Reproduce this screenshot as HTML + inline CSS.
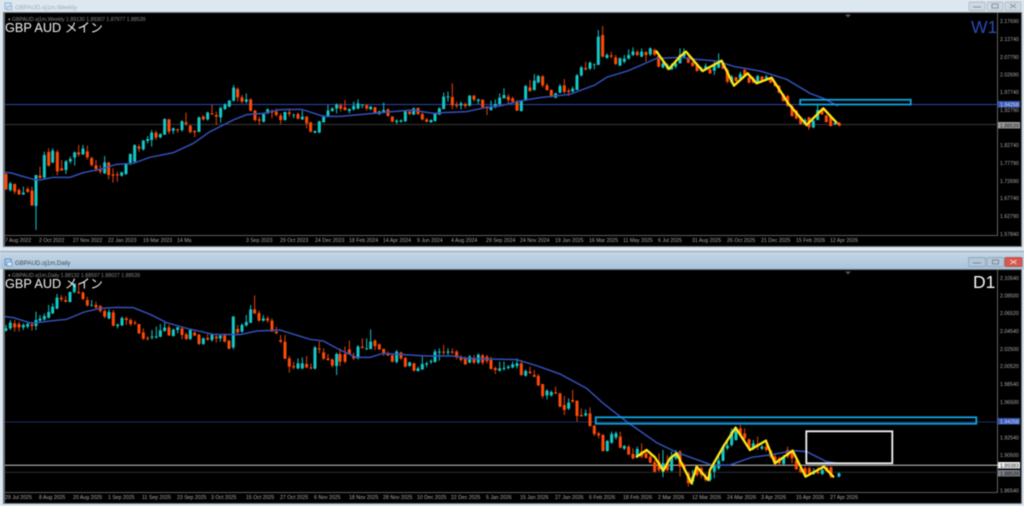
<!DOCTYPE html>
<html><head><meta charset="utf-8"><style>
html,body{margin:0;padding:0;background:#dde7f0;width:1024px;height:506px;overflow:hidden}
svg{display:block;filter:blur(.42px)}
text{font-family:"Liberation Sans","Noto Sans CJK JP",sans-serif}
.tw{stroke:#14c4c4;stroke-width:3;fill:none}
.ow{stroke:#e8400c;stroke-width:3;fill:none}
.tb{stroke:#14c8c8;stroke-width:9;fill:none}
.ob{stroke:#ff4a08;stroke-width:9;fill:none}
.ma{stroke:#3250b8;stroke-width:4.500;fill:none}
.ye{stroke:#ffe814;stroke-width:7;fill:none;stroke-linejoin:round}
.ax text{font-size:5.200px;fill:#a8a8a8}
.ti{font-size:5.200px;fill:#8a8a8a}
.big{font-size:12.700px;fill:#f0f0f0}
.lb{font-size:5.200px}
</style></head><body>
<svg width="1024" height="506" viewBox="0 0 1024 506" xmlns="http://www.w3.org/2000/svg">
<defs><linearGradient id="g1" x1="0" y1="0" x2="0" y2="1"><stop offset="0" stop-color="#c4d6e6"/><stop offset="1" stop-color="#aac4dc"/></linearGradient></defs>
<rect width="1024" height="506" fill="#dde7f0"/>
<!-- weekly window -->
<rect x="3" y="12" width="1019" height="235" fill="#6e7378"/>
<rect x="5" y="13" width="1016" height="233" fill="#000"/>
<text x="15" y="9.500" font-size="6.100" fill="#a4acb4">GBPAUD.oj1m,Weekly</text>
<rect x="5" y="3" width="6" height="6" fill="none" stroke="#8fb0d4" stroke-width="1"/>
<rect x="7" y="6" width="5" height="4" fill="#c8d8ea" stroke="#8fb0d4" stroke-width=".7"/>
<g fill="#cdd8e2" stroke="#aab4be" stroke-width=".7"><rect x="969" y="2" width="16" height="8.500" rx="1"/><rect x="987" y="2" width="16" height="8.500" rx="1"/><rect x="1005" y="2" width="16" height="8.500" rx="1"/></g>
<g stroke="#8a949e" fill="none"><path d="M973 7h8"/><rect x="992" y="4" width="6" height="4"/><path d="M1010 4l6 4m0-4l-6 4"/></g>
<path d="M5 235.500H997.500V13" stroke="#7a7a7a" stroke-width=".8" fill="none"/>
<path d="M845 14.500h6l-3 3z" fill="#555"/>
<path d="M5 104.500H998" stroke="#2a48ac" stroke-width="1"/>
<path d="M5 124.500H998" stroke="#383838" stroke-width="1"/>
<g transform="scale(.3333)">
<path class="tw" d="M31 545V575M70 560V585M108 525V690M133 455V535M158 445V490M198 480V522M211 470V490M224 455V497M249 435V465M314 468V522M365 515V530M378 490V525M391 460V495M404 433V490M430 420V452M443 408V430M455 390V440M481 400V415M494 355V405M520 382V402M546 360V395M597 350V395M623 335V362M662 320V368M675 310V330M688 300V322M701 255V305M739 280V310M791 340V368M803 325V342M855 335V362M881 340V355M907 332V360M945 392V400M958 362V400M971 345V368M984 315V352M997 322V335M1010 310V340"/>
<path class="tb" d="M31 550V570M70 578V583M108 525V618M133 465V533M158 452V487M198 484V510M211 477V484M224 457V473M249 446V463M314 487V520M365 517V527M378 491V522M391 462V488M404 435V485M430 422V448M443 417V423M455 398V420M481 402V412M494 357V404M520 385V392M546 364V390M597 352V396M623 338V358M662 324V352M675 314V327M688 302V320M701 263V302M739 298V305M791 342V365M803 328V340M855 336V360M881 345V347M907 350V358M945 393V398M958 364V397M971 350V367M984 332V350M997 325V333M1010 314V326"/>
<path class="ow" d="M18 520V570M44 550V582M57 565V585M83 560V578M96 560V618M120 500V535M146 445V500M172 450V525M185 480V510M236 435V470M262 437V478M275 470V500M288 480V515M301 495V522M326 485V538M339 505V548M352 515V545M417 433V455M468 392V420M507 357V402M533 385V398M558 338V378M571 375V400M584 390V412M610 345V362M636 315V345M649 335V375M713 262V305M726 285V310M752 295V335M765 330V365M778 350V375M816 328V355M829 325V350M842 340V372M868 325V350M894 338V358M920 348V385M932 365V398"/>
<path class="ob" d="M18 522V568M44 552V575M57 570V583M83 567V576M96 572V616M120 527V534M146 456V497M172 456V514M185 505V512M236 457V463M262 454V472M275 474V495M288 496V507M301 510V515M326 488V525M339 523V527M352 523V526M417 440V446M468 398V413M507 358V395M533 388V391M558 367V372M571 377V396M584 393V397M610 350V358M636 340V343M649 345V350M713 267V292M726 292V305M752 298V332M765 332V360M778 358V362M816 335V338M829 335V345M842 347V360M868 337V342M894 342V356M920 350V370M932 367V395"/>
</g>
<g transform="translate(340) scale(.3333)">
<path class="tw" d="M28 325V340M41 305V332M54 298V328M67 312V325M92 318V330M118 332V345M131 308V340M170 358V372M183 358V368M196 332V365M221 322V345M273 358V368M285 340V365M298 322V345M311 278V328M324 275V305M363 305V328M389 285V320M415 295V312M453 302V332M466 298V325M479 280V315M492 265V295M544 300V335M557 255V303M583 222V272M595 225V250M647 278V295M660 252V280M698 260V278M711 222V270M724 198V230M750 185V210M763 190V208M775 90V195M801 160V175M840 172V198M853 165V190M866 148V178M879 142V168M905 145V172M931 142V168M969 185V205M982 190V210M995 190V210M1007 185V205"/>
<path class="tb" d="M28 327V333M41 318V328M54 310V326M67 314V316M92 320V328M118 334V342M131 330V336M170 362V366M183 361V365M196 334V364M221 325V344M273 360V367M285 342V363M298 325V344M311 290V327M324 289V292M363 310V316M389 287V317M415 299V303M453 322V330M466 312V320M479 293V313M492 285V295M544 303V333M557 258V302M583 242V270M595 228V247M647 280V293M660 258V278M698 266V274M711 226V270M724 202V226M750 188V206M763 193V195M775 110V195M801 165V174M840 175V197M853 176V185M866 165V176M879 154V165M905 155V170M931 145V163M969 190V202M982 195V205M995 198V208M1007 190V200"/>
<path class="ow" d="M2 310V335M15 300V332M80 312V332M105 320V342M144 325V350M157 348V368M209 330V345M234 322V345M247 338V362M260 354V368M337 250V328M350 305V325M376 308V325M402 285V305M428 298V325M441 318V345M505 282V310M518 290V310M531 300V333M570 240V275M608 225V262M621 250V272M634 268V292M673 237V280M686 265V288M737 185V212M788 78V172M814 155V175M827 165V195M892 150V168M918 155V185M944 145V168M956 160V202"/>
<path class="ob" d="M2 316V326M15 322V330M80 316V325M105 322V340M144 328V348M157 350V364M209 335V342M234 324V342M247 342V358M260 358V365M337 291V316M350 315V318M376 312V318M402 287V299M428 299V322M441 320V325M505 290V300M518 295V305M531 305V332M570 262V273M608 229V256M621 256V270M634 270V288M673 256V276M686 272V276M737 204V208M788 105V170M814 166V170M827 172V192M892 156V165M918 156V165M944 150V164M956 168V200"/>
</g>
<g transform="translate(680) scale(.3333)">
<path class="tw" d="M0 145V190M12 145V175M64 200V215M77 190V210M103 185V225M116 160V205M155 225V250M181 215V240M233 225V248M259 225V240M375 355V375M400 360V385M413 315V360M465 368V375"/>
<path class="tb" d="M0 165V190M12 155V170M64 205V212M77 198V206M103 195V212M116 188V203M155 230V248M181 222V236M233 228V245M259 230V236M375 360V372M400 362V382M413 330V360M465 369V374"/>
<path class="ow" d="M25 170V190M38 185V200M51 195V215M90 205V222M129 185V208M142 205V250M168 230V245M194 205V230M207 230V250M220 230V250M246 228V245M272 235V250M285 245V260M297 255V280M310 280V305M323 285V320M336 315V350M349 330V358M362 350V375M387 350V390M426 325V345M439 345V368M452 345V380M478 368V380"/>
<path class="ob" d="M25 174V188M38 188V198M51 195V213M90 208V220M129 188V206M142 210V245M168 232V243M194 210V228M207 233V248M220 235V248M246 230V243M272 237V248M285 248V258M297 258V278M310 283V303M323 288V318M336 318V348M349 332V356M362 352V372M387 352V382M426 330V343M439 346V366M452 350V378M478 370V377"/>
</g>
<g transform="scale(.3333)">
<polyline class="ma" points="15,517 35,519 60,527 100,538 120,540 160,532 210,532 250,518 300,508 350,493 400,490 450,472 520,458 580,430 630,395 700,360 740,344 790,340 840,329 905,328 970,349 1020,349 1120,340 1235,330 1300,340 1330,338 1400,335 1460,322 1500,318 1560,303 1620,293 1710,283 1785,255 1820,232 1885,212 1970,175 2040,172 2090,178 2150,183 2205,200 2280,213 2360,238 2430,280 2470,295 2515,318"/>
<polyline class="ye" points="1968,152 2007,207 2040,170 2058,155 2108,213 2165,182 2202,257 2243,220 2270,250 2315,233 2365,310 2420,375 2470,325 2510,368"/>
<path d="M2510 368L2520 372" stroke="#ff7a10" stroke-width="6" fill="none"/>
</g>
<rect x="800.200" y="99.800" width="110.500" height="4.700" fill="none" stroke="#0ea4e0" stroke-width="1.800"/>
<text x="5" y="32" class="big">GBP AUD メイン</text>
<text x="8" y="21" class="ti">▾ GBPAUD.oj1m,Weekly  1.89130 1.89307 1.87977 1.88539</text>
<text x="971" y="33" font-size="17.500" fill="#2a4cb4">W1</text>
<g class="ax">
<text x="1000" y="23">2.17690</text><text x="1000" y="41">2.12740</text><text x="1000" y="59">2.07790</text><text x="1000" y="76.500">2.02690</text><text x="1000" y="94">1.97740</text><text x="1000" y="112">1.92790</text><text x="1000" y="147">1.82740</text><text x="1000" y="165">1.77790</text><text x="1000" y="183">1.72690</text><text x="1000" y="200">1.67740</text><text x="1000" y="218">1.62790</text><text x="1000" y="236">1.57840</text>
<text x="5" y="242">7 Aug 2022</text><text x="39" y="242">2 Oct 2022</text><text x="73" y="242">27 Nov 2022</text><text x="108" y="242">22 Jan 2023</text><text x="143" y="242">19 Mar 2023</text><text x="177" y="242">14 Ma</text><text x="246" y="242">3 Sep 2023</text><text x="280" y="242">29 Oct 2023</text><text x="315" y="242">24 Dec 2023</text><text x="349" y="242">18 Feb 2024</text><text x="383" y="242">14 Apr 2024</text><text x="417" y="242">9 Jun 2024</text><text x="451" y="242">4 Aug 2024</text><text x="486" y="242">29 Sep 2024</text><text x="520" y="242">24 Nov 2024</text><text x="555" y="242">19 Jan 2025</text><text x="589" y="242">16 Mar 2025</text><text x="623" y="242">11 May 2025</text><text x="658" y="242">6 Jul 2025</text><text x="692" y="242">31 Aug 2025</text><text x="727" y="242">26 Oct 2025</text><text x="761" y="242">21 Dec 2025</text><text x="796" y="242">15 Feb 2026</text><text x="830" y="242">12 Apr 2026</text>
</g>
<rect x="998" y="101" width="22" height="6.500" fill="#3a58b8"/><text x="1000" y="106.300" class="lb" fill="#d8e0f0">1.94258</text>
<rect x="998" y="122" width="22" height="6.500" fill="#9a9a9a"/><text x="1000" y="127.300" class="lb" fill="#222">1.88539</text>

<!-- daily window -->
<rect x="0" y="249" width="1024" height="257" fill="#dde7f0"/>
<rect x="0" y="251" width="1024" height="1.300" fill="#9aa0a6"/>
<rect x="0" y="252" width="1024" height="17" fill="url(#g1)"/>
<rect x="3" y="269" width="1019" height="235" fill="#6e7378"/>
<rect x="5" y="270" width="1016" height="233" fill="#000"/>
<text x="15" y="265" font-size="6.100" fill="#3e4c5a">GBPAUD.oj1m,Daily</text>
<rect x="5" y="259" width="6" height="6" fill="none" stroke="#5c90cc" stroke-width="1"/>
<rect x="7" y="262" width="5" height="4" fill="#d8e6f4" stroke="#5c90cc" stroke-width=".7"/>
<g stroke="#8a9cae" stroke-width=".7"><rect x="968.500" y="257.500" width="17" height="9" rx="1" fill="#b2c6da"/><rect x="987" y="257.500" width="17" height="9" rx="1" fill="#b2c6da"/><rect x="1005" y="257.500" width="17" height="9" rx="1" fill="#d8584c" stroke="#b04038"/></g>
<g stroke="#7c8a98" fill="none"><path d="M973 263h8"/><rect x="992.500" y="260" width="6" height="4"/><path d="M1010.500 260l6 4m0-4l-6 4" stroke="#f0d8d4"/></g>
<path d="M5 492.500H997.500V270" stroke="#7a7a7a" stroke-width=".8" fill="none"/>
<path d="M845 271.500h6l-3 3z" fill="#555"/>
<path d="M5 422H998" stroke="#1c2c64" stroke-width="1"/>
<path d="M5 465.300H998" stroke="#c8c8c8" stroke-width="1"/>
<path d="M5 472.300H998" stroke="#2c2c2c" stroke-width="1"/>
<g transform="translate(0,250) scale(.3333)">
<path class="tw" d="M18 225V245M31 210V240M70 220V240M83 215V235M108 185V240M120 195V215M133 190V212M146 165V205M158 160V192M171 132V178M210 125V157M223 100V130M275 150V170M327 178V208M353 220V235M366 200V228M456 240V268M469 230V266M481 222V262M494 218V245M520 235V260M533 230V250M571 235V270M610 262V285M636 250V275M661 252V275M700 198V298M726 220V248M739 195V230M752 165V220M790 195V215M894 325V358M907 322V358M945 288V358M1010 308V375"/>
<path class="tb" d="M18 235V242M31 218V235M70 225V232M83 222V230M108 210V228M120 206V212M133 198V208M146 186V203M158 170V190M171 143V176M210 126V156M223 100V126M275 165V167M327 186V205M353 224V228M366 204V226M456 260V263M469 259V262M481 241V260M494 233V243M520 239V258M533 232V240M571 240V267M610 265V282M636 253V270M661 257V265M700 200V292M726 225V245M739 216V226M752 178V218M790 205V212M894 340V355M907 340V355M945 292V356M1010 312V348"/>
<path class="ow" d="M44 210V245M57 215V245M96 215V242M184 135V155M197 138V158M236 100V132M249 125V150M262 140V170M288 155V180M301 165V188M314 178V205M340 180V230M379 200V225M392 205V228M405 212V225M417 222V252M430 235V270M443 258V272M507 225V258M546 232V268M559 248V270M584 240V258M597 252V285M623 252V272M649 250V278M674 250V278M687 270V298M713 225V252M764 136V192M777 182V215M803 198V218M816 205V245M829 230V252M842 255V280M855 255V328M868 318V368M881 335V358M920 318V355M933 340V358M958 275V310M971 295V330M984 312V332M997 325V352"/>
<path class="ob" d="M44 220V232M57 222V232M96 224V228M184 143V148M197 150V155M236 126V129M249 128V147M262 150V166M288 165V172M301 168V183M314 183V200M340 187V227M379 205V210M392 210V222M405 217V220M417 222V250M430 247V266M443 264V267M507 232V256M546 235V255M559 253V267M584 248V257M597 254V282M623 264V269M649 260V265M674 256V275M687 272V296M713 237V247M764 178V190M777 189V212M803 205V212M816 212V245M829 245V250M842 270V275M855 275V326M868 325V350M881 348V352M920 342V352M933 352V355M958 295V298M971 307V326M984 325V330M997 328V347"/>
</g>
<g transform="translate(340,250) scale(.3333)">
<path class="tw" d="M54 285V328M80 265V300M92 238V298M170 300V340M209 335V350M234 350V365M247 320V360M260 335V352M273 328V342M285 298V338M298 295V332M324 295V315M389 315V340M415 310V342M479 335V365M492 335V362M505 345V358M518 335V355M531 325V355M557 358V380M621 418V448M634 422V440M686 445V480M737 478V500M802 570V605M815 545V582M828 545V568M853 585V600M892 590V622M969 600V682M995 605V665M1008 600V630"/>
<path class="tb" d="M54 290V325M80 295V298M92 275V297M170 305V336M209 337V348M234 355V363M247 342V358M260 340V344M273 333V336M285 305V336M298 305V308M324 305V308M389 320V338M415 314V338M479 355V362M492 354V357M505 350V354M518 343V352M531 340V348M557 363V377M621 422V436M634 426V436M686 458V476M737 490V496M802 573V603M815 552V578M828 550V562M853 588V596M892 597V620M969 640V665M995 620V662M1008 608V625"/>
<path class="ow" d="M0 295V348M15 290V340M28 272V315M41 308V330M67 265V295M105 268V300M118 280V300M131 295V318M144 305V318M157 312V338M183 305V330M196 320V352M222 338V365M311 285V315M337 295V312M350 300V328M363 315V335M376 320V345M402 315V342M428 312V345M441 315V340M453 320V358M466 350V372M544 330V378M570 350V372M583 360V382M595 372V408M608 402V445M647 410V432M660 428V472M673 438V495M698 420V458M711 452V515M724 475V500M750 472V530M763 525V558M776 545V565M789 552V605M841 545V595M866 585V615M879 595V628M905 580V625M918 600V625M931 615V640M944 630V668M957 610V665M982 615V665"/>
<path class="ob" d="M0 312V335M15 312V335M28 298V312M41 318V325M67 290V294M105 272V288M118 283V298M131 297V312M144 310V316M157 316V335M183 308V325M196 324V350M222 340V362M311 305V308M337 305V308M350 305V322M363 322V330M376 325V343M402 325V338M428 316V338M441 320V333M453 330V357M466 354V360M544 340V375M570 365V369M583 375V380M595 378V406M608 402V438M647 427V431M660 430V470M673 465V480M698 450V455M711 452V498M724 495V499M750 490V528M763 527V552M776 550V556M789 555V603M841 560V593M866 590V614M879 612V625M905 605V620M918 610V624M931 620V638M944 637V665M957 635V660M982 640V660"/>
</g>
<g transform="translate(680,250) scale(.3333)">
<path class="tw" d="M38 660V705M90 665V695M103 640V685M116 615V660M129 585V635M142 570V600M155 535V590M168 530V572M220 570V600M246 585V600M311 615V645M401 655V675M427 655V675M477 668V682"/>
<path class="tb" d="M38 680V695M90 670V690M103 645V665M116 632V655M129 590V632M142 587V595M155 545V585M168 535V570M220 580V595M246 590V596M311 622V642M401 665V672M427 660V672M477 670V680"/>
<path class="ow" d="M0 600V680M12 640V660M25 665V710M51 645V680M64 650V685M77 670V695M181 525V560M194 535V575M207 565V600M233 560V600M259 580V605M272 600V625M285 610V650M298 620V645M323 590V625M336 600V640M349 630V660M362 650V670M375 650V680M388 650V672M414 650V672M440 650V665M453 650V685"/>
<path class="ob" d="M0 605V650M12 645V655M25 670V700M51 650V675M64 655V675M77 680V690M181 535V555M194 550V565M207 568V595M233 582V590M259 590V600M272 602V620M285 620V640M298 625V640M323 600V620M336 605V625M349 632V658M362 655V666M375 655V678M388 655V670M414 665V670M440 652V663M453 652V680"/>
</g>
<g transform="translate(0,250) scale(.3333)">
<polyline class="ma" points="15,200 40,203 95,220 150,213 200,208 250,187 300,175 350,172 400,173 450,193 500,218 560,235 640,253 720,254 770,243 840,240 930,268 970,273 1020,300 1070,322 1110,322 1150,310 1280,318 1360,318 1400,325 1550,329 1610,347 1680,372 1760,415 1810,460 1880,515 1970,578 2030,607 2135,645 2190,645 2255,622 2310,615 2380,602 2420,605 2480,635 2515,640"/>
<polyline class="ye" points="1908,622 1940,600 1965,622 1990,662 2010,625 2030,610 2075,700 2090,650 2125,690 2130,660 2170,590 2207,533 2250,600 2298,572 2325,640 2378,602 2417,680 2472,650 2502,682"/>
</g>
<rect x="595.800" y="417.300" width="380.500" height="6.400" fill="none" stroke="#0ea4e0" stroke-width="1.800"/>
<rect x="806.300" y="431.300" width="86" height="32" fill="none" stroke="#f4f4f4" stroke-width="1.800"/>
<text x="5" y="288" class="big">GBP AUD メイン</text>
<text x="8" y="277" class="ti">▾ GBPAUD.oj1m,Daily  1.88132 1.88597 1.88027 1.88539</text>
<text x="973" y="288" font-size="17.500" fill="#f4f4f4">D1</text>
<g class="ax">
<text x="1000" y="280">2.10540</text><text x="1000" y="297.600">2.08500</text><text x="1000" y="315">2.06520</text><text x="1000" y="333">2.04540</text><text x="1000" y="351">2.02500</text><text x="1000" y="368">2.00520</text><text x="1000" y="386">1.98540</text><text x="1000" y="404">1.96500</text><text x="1000" y="439.600">1.92540</text><text x="1000" y="457">1.90500</text><text x="1000" y="492.700">1.86540</text>
<text x="5" y="499">29 Jul 2025</text><text x="39" y="499">8 Aug 2025</text><text x="73" y="499">20 Aug 2025</text><text x="108" y="499">1 Sep 2025</text><text x="142" y="499">11 Sep 2025</text><text x="177" y="499">23 Sep 2025</text><text x="211" y="499">3 Oct 2025</text><text x="246" y="499">15 Oct 2025</text><text x="280" y="499">27 Oct 2025</text><text x="314" y="499">6 Nov 2025</text><text x="349" y="499">18 Nov 2025</text><text x="383" y="499">28 Nov 2025</text><text x="417" y="499">10 Dec 2025</text><text x="451" y="499">22 Dec 2025</text><text x="486" y="499">5 Jan 2026</text><text x="520" y="499">15 Jan 2026</text><text x="555" y="499">27 Jan 2026</text><text x="589" y="499">6 Feb 2026</text><text x="623" y="499">18 Feb 2026</text><text x="658" y="499">2 Mar 2026</text><text x="692" y="499">12 Mar 2026</text><text x="727" y="499">24 Mar 2026</text><text x="761" y="499">3 Apr 2026</text><text x="796" y="499">15 Apr 2026</text><text x="830" y="499">27 Apr 2026</text>
</g>
<rect x="998" y="418" width="22" height="6.500" fill="#3a58b8"/><text x="1000" y="423.300" class="lb" fill="#d8e0f0">1.94258</text>
<rect x="998" y="462" width="22" height="6.500" fill="#f0f0f0"/><text x="1000" y="467.300" class="lb" fill="#222">1.89383</text>
<rect x="998" y="470" width="22" height="6.500" fill="#7c8288"/><text x="1000" y="475.300" class="lb" fill="#111">1.88539</text>
</svg>
</body></html>
